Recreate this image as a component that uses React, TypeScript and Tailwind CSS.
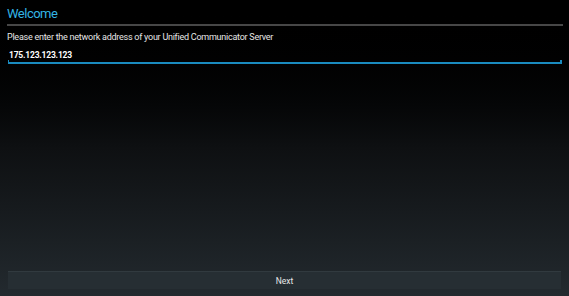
export default function App() {
  return (
    <div
      className="h-[296px] w-[569px] flex flex-col bg-gradient-to-b from-[#000000] via-[#0e1012] to-[#232a2f] font-['Roboto',sans-serif]"
    >
      {/* Header */}
      <div className="px-[7px] pt-[5px]">
        <h1 className="text-[13px] leading-[18px] tracking-[-0.5px] text-[#33b5e5]">Welcome</h1>
        <div className="mt-[1px] h-[2px] w-[556px] bg-[#474747]" />
      </div>

      {/* Prompt and address field */}
      <div className="px-[7px] pt-[5px]">
        <p className="text-[9px] leading-[12px] tracking-[-0.25px] text-[#e6e6e6]">
          Please enter the network address of your Unified Communicator Server
        </p>
        <div className="relative mt-[7px] ml-[1px] w-[554px]">
          <input
            defaultValue="175.123.123.123"
            className="block w-full bg-transparent px-[1px] pb-[1px] text-[8.5px] font-bold leading-[11px] tracking-[-0.2px] text-white outline-none"
          />
          <div className="h-[2px] w-full bg-[#1a8bbf]" />
          <div className="absolute left-0 bottom-0 h-[4px] w-[1px] bg-[#1a8bbf]" />
          <div className="absolute right-0 bottom-0 h-[4px] w-[2px] bg-[#1a8bbf]" />
        </div>
      </div>

      <div className="flex-1" />

      {/* Bottom action */}
      <div className="px-[8px] pb-[7px]">
        <button className="block h-[18px] w-[553px] border-t border-[#313a3f] bg-[#262e33] text-center text-[8.5px] leading-[18px] text-[#e8e8e8]">
          Next
        </button>
      </div>
    </div>
  )
}
